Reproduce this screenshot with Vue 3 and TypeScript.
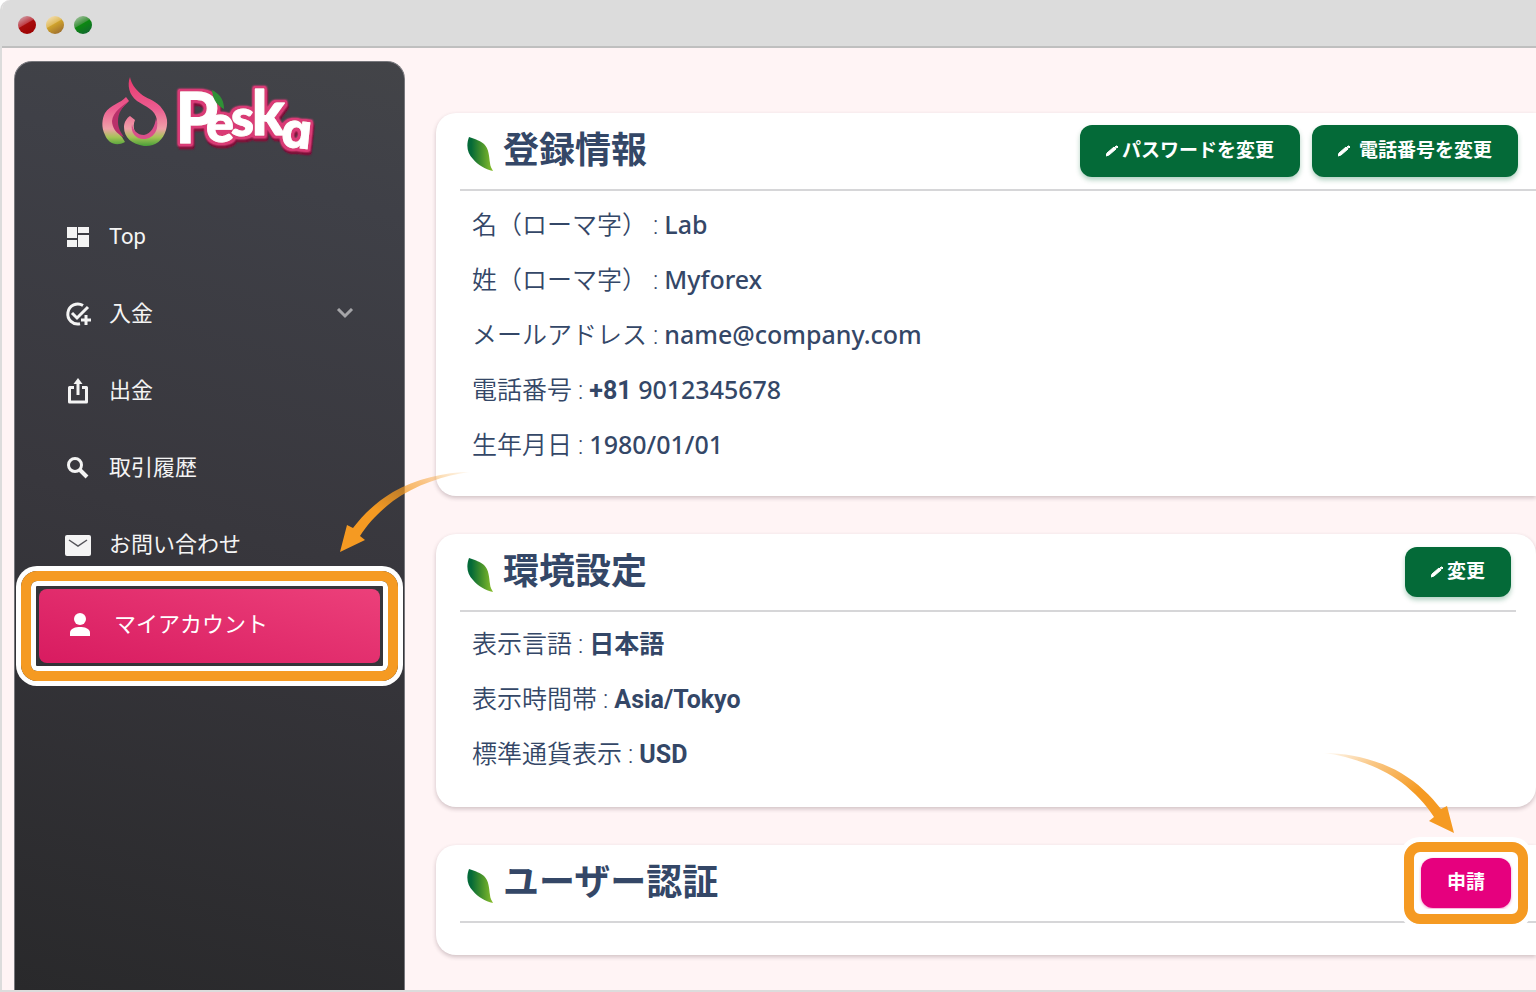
<script setup lang="ts">
interface MenuItem {
  label: string
  icon: 'dashboard' | 'deposit' | 'withdraw' | 'search' | 'mail'
  expandable?: boolean
}

interface Field {
  label: string
  prefix?: string
  value: string
  face: 'humanist' | 'grotesque'
}

const menu: MenuItem[] = [
  { label: 'Top', icon: 'dashboard' },
  { label: '入金', icon: 'deposit', expandable: true },
  { label: '出金', icon: 'withdraw' },
  { label: '取引履歴', icon: 'search' },
  { label: 'お問い合わせ', icon: 'mail' },
]

const profile: Field[] = [
  { label: '名（ローマ字）', value: 'Lab', face: 'humanist' },
  { label: '姓（ローマ字）', value: 'Myforex', face: 'humanist' },
  { label: 'メールアドレス', value: 'name@company.com', face: 'humanist' },
  { label: '電話番号', prefix: '+81', value: '9012345678', face: 'humanist' },
  { label: '生年月日', value: '1980/01/01', face: 'humanist' },
]

const settings: Field[] = [
  { label: '表示言語', value: '日本語', face: 'grotesque' },
  { label: '表示時間帯', value: 'Asia/Tokyo', face: 'grotesque' },
  { label: '標準通貨表示', value: 'USD', face: 'grotesque' },
]
</script>

<template>
  <div class="window">
    <svg class="defs" aria-hidden="true">
      <defs>
        <linearGradient id="leafFill" x1="0" y1="0" x2="1" y2="0">
          <stop offset="0.15" stop-color="#046a38" />
          <stop offset="0.5" stop-color="#3c8c2c" />
          <stop offset="1" stop-color="#8abf2c" />
        </linearGradient>
        <linearGradient id="arrowFill" x1="1" y1="0" x2="0" y2="1">
          <stop offset="0" stop-color="#f59a22" stop-opacity="0.05" />
          <stop offset="0.25" stop-color="#f59a22" stop-opacity="0.55" />
          <stop offset="0.6" stop-color="#f59a22" />
        </linearGradient>
        <symbol id="leaf" viewBox="0 0 26 36">
          <path d="M2 1C8 3 14 5 17 8 22 13 22 20 23 27 23 30 25 33 26 35 18 33 11 29 6 23 0 17-1 9 2 1z" fill="url(#leafFill)" />
        </symbol>
        <symbol id="pencil" viewBox="0 0 12 12">
          <path d="M0 11l1-3 7-6 2 2-7 6zM9 2l1-1h1l1 1-1 1z" fill="#fff" stroke="#fff" stroke-width="1" />
        </symbol>
        <symbol id="arrow" viewBox="0 0 130 82">
          <path
            d="M130 0C105 0 75 7 53 20 36 30 23 43 13 56L7 53 0 80 25 68 20 64C29 50 39 40 53 29 75 13 105 3 130 0z"
            fill="url(#arrowFill)"
          />
        </symbol>
      </defs>
    </svg>

    <header class="titlebar">
      <span class="light red"></span>
      <span class="light yellow"></span>
      <span class="light green"></span>
    </header>

    <div class="page">
      <aside class="sidebar">
        <a class="brand" href="#" aria-label="Peska">
          <svg width="216" height="90" viewBox="0 0 216 90">
            <defs>
              <linearGradient id="peach" gradientUnits="userSpaceOnUse" x1="0" y1="0" x2="0" y2="70">
                <stop offset="0" stop-color="#e8386c" />
                <stop offset="0.45" stop-color="#ec5c90" />
                <stop offset="0.74" stop-color="#efa0a8" />
                <stop offset="0.86" stop-color="#a4c456" />
                <stop offset="1" stop-color="#3f9a35" />
              </linearGradient>
              <filter id="rim" x="-10%" y="-10%" width="120%" height="125%">
                <feMorphology in="SourceAlpha" operator="dilate" radius="2" result="fat" />
                <feGaussianBlur in="fat" stdDeviation="0.900" result="soft" />
                <feComponentTransfer in="soft" result="edge">
                  <feFuncA type="linear" slope="2.200" />
                </feComponentTransfer>
                <feOffset in="edge" dx="1" dy="3" result="low" />
                <feFlood flood-color="#7a1238" />
                <feComposite in2="low" operator="in" result="shade" />
                <feFlood flood-color="#d93a76" />
                <feComposite in2="edge" operator="in" result="glow" />
                <feMerge>
                  <feMergeNode in="shade" />
                  <feMergeNode in="glow" />
                  <feMergeNode in="SourceGraphic" />
                </feMerge>
              </filter>
            </defs>
            <path
              d="M29 0C30 6 34 12 40 17 46 22 52 22 59 29 65 36 68 43 65 53 62 64 53 70 43 69 31 67 23 61 23 50 23 45 26 41 29 39L34 43C31 50 33 59 43 61 52 60 57 53 56 43 54 32 45 30 36 24 28 18 26 8 29 0z"
              fill="url(#peach)"
            />
            <path d="M25 20L28 24C23 29 15 36 14 44 14 51 18 57 21 60L24 65C15 70 7 66 4 58 0 50 1 42 4 36 9 28 20 26 25 20z" fill="url(#peach)" />
            <path d="M28 24C21 31 17 35 17 45 17 51 20 56 23 60 15 57 11 50 11 44 12 35 21 29 28 24z" fill="#b8306a" />
            <path d="M31 47C29 56 36 63 44 62 53 61 59 52 55 41 54 49 50 57 43 58 36 58 32 53 31 47z" fill="#d8508a" />
            <g class="letters" filter="url(#rim)">
              <text>
                <tspan x="74" y="66" class="p">P</tspan>
                <tspan x="105" y="65" class="e">e</tspan>
                <tspan x="130" y="59" class="s">s</tspan>
                <tspan x="151" y="58" class="k">k</tspan>
                <tspan x="179" y="69" rotate="6" class="a">a</tspan>
              </text>
            </g>
            <path d="M111 13c6 3 12 8 12 19-6-3-11-8-12-19z" fill="#2f9136" />
          </svg>
        </a>

        <nav class="menu">
          <a v-for="item in menu" :key="item.label" class="item" href="#">
            <svg v-if="item.icon === 'dashboard'" class="icon" viewBox="0 0 26 26">
              <path d="M2 3h10v11H2zM13 3h11v6H13zM13 11h11v12H13zM2 16h10v7H2z" fill="currentColor" />
            </svg>
            <svg v-else-if="item.icon === 'deposit'" class="icon" viewBox="0 0 26 26" fill="none" stroke="currentColor" stroke-width="3">
              <path d="M18 4.500A10 10 0 1 0 15 22.800" />
              <path d="M7 12l5 5L23 6" />
              <path d="M21 14v10M16 19h10" />
            </svg>
            <svg v-else-if="item.icon === 'withdraw'" class="icon" viewBox="0 0 26 26" fill="none" stroke="currentColor" stroke-width="3">
              <path d="M9 9.500H4.500V24h17V9.500H17" stroke-linejoin="round" />
              <path d="M13 17V5" />
              <path d="M8.500 6L13 0l4.500 6z" fill="currentColor" stroke="none" />
            </svg>
            <svg v-else-if="item.icon === 'search'" class="icon" viewBox="0 0 26 26" fill="none" stroke="currentColor" stroke-width="3">
              <circle cx="10" cy="10" r="6.500" />
              <path d="M14.500 14.500l7.500 7.500" stroke-width="4" />
            </svg>
            <svg v-else class="icon" viewBox="0 0 26 26">
              <rect x="0" y="3" width="26" height="21" rx="2" fill="currentColor" />
              <path d="M4 8l9 6 9-6" fill="none" stroke="#55545a" stroke-width="1.500" />
            </svg>
            <span>{{ item.label }}</span>
            <svg v-if="item.expandable" class="chevron" viewBox="0 0 18 12">
              <path d="M2 1l7 7 7-7" fill="none" stroke="currentColor" stroke-width="3" />
            </svg>
          </a>
          <a class="item active" href="#" aria-current="page">
            <svg class="icon" viewBox="0 0 26 26">
              <circle cx="15" cy="7" r="6" fill="currentColor" />
              <path d="M5 24v-3c0-5 6-6 10-6s10 1 10 6v3z" fill="currentColor" />
            </svg>
            <span>マイアカウント</span>
            <i class="ring"></i>
            <svg class="arrow"><use href="#arrow" /></svg>
          </a>
        </nav>
      </aside>

      <main class="content">
        <section class="card open">
          <div class="head">
            <svg class="leaf"><use href="#leaf" /></svg>
            <h2>登録情報</h2>
            <div class="actions">
              <button type="button" class="btn tall"><svg class="pencil"><use href="#pencil" /></svg>パスワードを変更</button>
              <button type="button" class="btn tall wide"><svg class="pencil"><use href="#pencil" /></svg>電話番号を変更</button>
            </div>
          </div>
          <dl class="fields">
            <div v-for="f in profile" :key="f.label" class="field">
              <dt>{{ f.label }} :</dt>
              <dd :class="f.face"><b v-if="f.prefix" class="prefix">{{ f.prefix }}</b> {{ f.value }}</dd>
            </div>
          </dl>
        </section>

        <section class="card">
          <div class="head">
            <svg class="leaf"><use href="#leaf" /></svg>
            <h2>環境設定</h2>
            <div class="actions">
              <button type="button" class="btn"><svg class="pencil"><use href="#pencil" /></svg>変更</button>
            </div>
          </div>
          <dl class="fields">
            <div v-for="f in settings" :key="f.label" class="field">
              <dt>{{ f.label }} :</dt>
              <dd :class="f.face">{{ f.value }}</dd>
            </div>
          </dl>
        </section>

        <section class="card open last">
          <div class="head">
            <svg class="leaf"><use href="#leaf" /></svg>
            <h2>ユーザー認証</h2>
            <div class="actions">
              <button type="button" class="btn apply">
                申請
                <i class="ring"></i>
                <svg class="arrow"><use href="#arrow" /></svg>
              </button>
            </div>
          </div>
        </section>
      </main>
    </div>
  </div>
</template>

<style>
body {
  background: #fff;
}
</style>

<style scoped>
* {
  box-sizing: border-box;
}

.window {
  display: flex;
  flex-direction: column;
  min-height: 100vh;
  overflow: hidden;
  background: #fff4f5;
  border: solid #dcdcdc;
  border-width: 0 0 2px 2px;
  border-top-left-radius: 10px;
  font-family: Roboto, "Noto Sans CJK JP", sans-serif;
}

.defs {
  position: absolute;
  width: 0;
  height: 0;
}

.titlebar {
  display: flex;
  align-items: center;
  gap: 10px;
  height: 48px;
  padding: 4px 16px 0;
  background: #dcdcdc;
  border-bottom: 2px solid #bfbfbf;
}

.light {
  width: 18px;
  height: 18px;
  border-radius: 50%;
}

.red {
  background: linear-gradient(150deg, #cc8c94 15%, #c04048 42%, #a80c0c 46%, #900 100%);
}

.yellow {
  background: linear-gradient(150deg, #f0d8a0 15%, #e0bc60 42%, #cfa22c 46%, #906030 100%);
}

.green {
  background: linear-gradient(150deg, #8cb888 15%, #409440 42%, #0c8810 46%, #146038 100%);
}

.page {
  display: flex;
  flex: 1;
  gap: 31px;
  padding-left: 12px;
}

.sidebar {
  position: relative;
  z-index: 1;
  flex: none;
  width: 391px;
  margin-top: 13px;
  border-radius: 18px 18px 0 0;
  background: linear-gradient(195deg, #434448, #3f4047 15%, #38373d 50%, #29292b);
  border: solid #77777c;
  border-width: 1px 1px 0;
}

.brand {
  display: block;
  height: 138px;
  padding: 15px 0 0 86px;
}

.letters text {
  fill: #fff;
  stroke: #fff;
  stroke-width: 1px;
  stroke-linejoin: round;
  font-family: Lato, sans-serif;
  font-weight: 900;
}

.letters .p {
  font-size: 70px;
  font-weight: 700;
}

.letters .e,
.letters .s {
  font-size: 52px;
}

.letters .k {
  font-size: 60px;
}

.letters .a {
  font-family: Inter, sans-serif;
  font-feature-settings: "cv11";
  font-size: 48px;
  font-weight: 700;
}

.menu {
  display: flex;
  flex-direction: column;
  gap: 5px;
  padding: 0 24px;
}

.item {
  position: relative;
  display: flex;
  align-items: center;
  gap: 18px;
  height: 72px;
  padding: 2px 26px 0;
  border-radius: 8px;
  color: #f4f4f4;
  font-size: 22px;
  line-height: 32px;
  text-decoration: none;
}

.item .icon {
  flex: none;
  width: 26px;
  height: 26px;
}

.item .chevron {
  width: 18px;
  height: 12px;
  margin-left: auto;
  color: #a5a5a8;
}

.item.active {
  gap: 23px;
  height: 74px;
  margin-top: 4px;
  padding: 0 26px 2px;
  background: linear-gradient(195deg, #ec407a, #d81b60);
  color: #fff;
}

.ring {
  position: absolute;
  inset: -18px;
  border: 10px solid #f59a22;
  border-radius: 16px;
  box-shadow: 0 0 0 5px #fff, inset 0 0 0 5px #fff;
}

.arrow {
  position: absolute;
  top: -117px;
  left: 301px;
  width: 130px;
  height: 82px;
}

.content {
  display: flex;
  flex: 1;
  flex-direction: column;
  gap: 38px;
  min-width: 0;
  padding: 65px 0 35px;
}

.card {
  padding: 0 20px 25px 24px;
  border-radius: 20px;
  background: #fff;
  box-shadow: 0 2px 4px rgba(60, 30, 40, 0.24);
}

.card.open {
  padding-right: 0;
  border-radius: 20px 0 0 20px;
}

.card.last {
  padding-bottom: 32px;
}

.head {
  display: flex;
  align-items: center;
  height: 78px;
  padding: 0 5px 0 7px;
  border-bottom: 2px solid #d6d6d8;
}

.open .head {
  padding-right: 18px;
}

.last .head {
  padding-right: 25px;
}

.leaf {
  width: 26px;
  height: 36px;
  margin: 6px 10px 0 0;
}

h2 {
  margin: 0;
  color: #344767;
  font-size: 36px;
  font-weight: 700;
  line-height: 48px;
}

.actions {
  display: flex;
  gap: 12px;
  margin-left: auto;
}

.btn {
  position: relative;
  display: flex;
  align-items: center;
  gap: 4px;
  height: 50px;
  padding: 0 26px;
  border: 0;
  border-radius: 12px;
  background: #046a38;
  box-shadow: 0 3px 5px rgba(4, 106, 56, 0.3);
  color: #fff;
  font: 700 19px/28px Roboto, "Noto Sans CJK JP", sans-serif;
  white-space: nowrap;
}

.btn.tall {
  height: 52px;
}

.btn.wide {
  gap: 9px;
}

.pencil {
  width: 12px;
  height: 12px;
}

.btn.apply {
  background: #e6007e;
  box-shadow: 0 1px 3px rgba(230, 0, 126, 0.4);
}

.apply .ring {
  inset: -16px -17px;
}

.apply .arrow {
  top: -105px;
  left: -97px;
  transform: scaleX(-1);
}

.fields {
  margin: 0;
  padding: 5px 0 0 12px;
}

.field {
  display: flex;
  align-items: baseline;
  height: 55px;
  padding-top: 10px;
  color: #344767;
  font-size: 25px;
  line-height: 36px;
}

dt {
  font-weight: 350;
}

dd {
  margin: 0 0 0 6px;
  font-weight: 700;
}

dd.humanist {
  font-family: "Noto Sans", "Open Sans", sans-serif;
  font-weight: 500;
}

.prefix {
  font-family: Roboto, sans-serif;
  font-weight: 700;
}
</style>
